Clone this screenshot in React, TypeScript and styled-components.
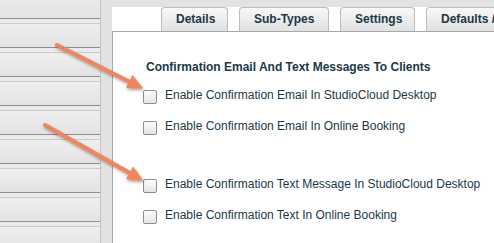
import React from 'react'
import styled, { createGlobalStyle } from 'styled-components'

const GlobalStyle = createGlobalStyle`
  html, body {
    margin: 0;
    padding: 0;
    background: #e2e2e2;
    overflow: hidden;
  }
  body {
    font-family: 'Liberation Sans', Arial, Helvetica, sans-serif;
  }
`

const tabs = [
  { label: 'Details', width: 67 },
  { label: 'Sub-Types', width: 90 },
  { label: 'Settings', width: 75 },
  { label: 'Defaults / Notifications', width: 150 },
]

const groups = [
  ['Enable Confirmation Email In StudioCloud Desktop', 'Enable Confirmation Email In Online Booking'],
  ['Enable Confirmation Text Message In StudioCloud Desktop', 'Enable Confirmation Text In Online Booking'],
]

export default function App() {
  return (
    <>
      <GlobalStyle />
      <Page>
        <Sidebar>
          <SideRow $short />
          {Array.from({ length: 8 }).map((_, i) => (
            <SideRow key={i} />
          ))}
        </Sidebar>
        <Gutter />
        <Main>
          <TabStrip>
            {tabs.map((t) => (
              <Tab key={t.label} $width={t.width}>
                {t.label}
              </Tab>
            ))}
          </TabStrip>
          <Panel>
            <Heading>Confirmation Email And Text Messages To Clients</Heading>
            {groups.map((g, gi) => (
              <Group key={gi}>
                {g.map((label) => (
                  <CheckRow key={label}>
                    <CheckBox />
                    <CheckLabel>{label}</CheckLabel>
                  </CheckRow>
                ))}
              </Group>
            ))}
          </Panel>
        </Main>
        <Arrows width="494" height="243" viewBox="0 0 494 243">
          <g fill="#f3845b" stroke="#f3845b" strokeLinecap="round" strokeLinejoin="round">
            <line x1="57" y1="45" x2="130" y2="82" strokeWidth="4" />
            <polygon points="142,88 126.6,87.5 132.4,75.9" strokeWidth="1" />
            <line x1="45" y1="125" x2="130" y2="173" strokeWidth="4" />
            <polygon points="142,180 126.6,178.8 133,167.4" strokeWidth="1" />
          </g>
        </Arrows>
      </Page>
    </>
  )
}

const Page = styled.div`
  position: relative;
  display: grid;
  grid-template-columns: 101px 11px 1fr;
  width: 494px;
  height: 243px;
  overflow: hidden;
`

const Sidebar = styled.div`
  display: flex;
  flex-direction: column;
  border-right: 1px solid #c4c4c4;
  overflow: hidden;
`

const SideRow = styled.div<{ $short?: boolean }>`
  flex: none;
  box-sizing: border-box;
  height: ${({ $short }) => ($short ? '19px' : '29px')};
  border-bottom: 1px solid #8e8e8e;
  background: ${({ $short }) =>
    $short
      ? 'linear-gradient(#e9e9e9, #e3e3e3)'
      : 'linear-gradient(#ebebeb 0 4px, #cbcbcb 4px 5px, #efefef 5px, #e3e3e3)'};
`

const Gutter = styled.div`
  background: #e2e2e2;
`

const Main = styled.div`
  display: flex;
  flex-direction: column;
  padding-top: 7px;
  min-width: 0;
`

const TabStrip = styled.div`
  display: flex;
  align-items: flex-end;
  gap: 11px;
  height: 24px;
  padding-left: 49px;
  background: #fff;
  overflow: hidden;
`

const Tab = styled.div<{ $width: number }>`
  flex: none;
  box-sizing: border-box;
  width: ${({ $width }) => $width}px;
  height: 24px;
  padding: 0 14px;
  border: 1px solid #bcbcbc;
  border-bottom: none;
  border-radius: 4px 4px 0 0;
  background: linear-gradient(#f8f8f8, #e1e1e1);
  color: #1c3848;
  font-size: 12px;
  font-weight: bold;
  line-height: 23px;
  text-align: center;
  white-space: nowrap;
  overflow: hidden;
`

const Panel = styled.div`
  flex: 1;
  display: flex;
  flex-direction: column;
  gap: 27px;
  padding: 28px 0 0 30px;
  background: #fff;
  border-top: 1px solid #a2abab;
  border-left: 1px solid #a2abab;
`

const Heading = styled.div`
  margin: 0 0 -22px 3px;
  color: #1c3848;
  font-size: 12px;
  font-weight: bold;
  line-height: 15px;
`

const Group = styled.div`
  display: flex;
  flex-direction: column;
`

const CheckRow = styled.div`
  display: flex;
  align-items: center;
  gap: 8px;
  height: 31px;
`

const CheckBox = styled.span`
  flex: none;
  box-sizing: border-box;
  width: 14px;
  height: 14px;
  margin-top: 2px;
  border: 1px solid #8c8c8c;
  border-radius: 2px;
  background: linear-gradient(#fdfdfd, #e4e4e4);
  box-shadow: inset 0 1px 0 #fff;
`

const CheckLabel = styled.span`
  color: #1c3848;
  font-size: 12px;
  line-height: 15px;
  white-space: nowrap;
`

const Arrows = styled.svg`
  position: absolute;
  left: 0;
  top: 0;
  pointer-events: none;
  filter: drop-shadow(1px 2px 1.5px rgba(0, 0, 0, 0.35));
`
